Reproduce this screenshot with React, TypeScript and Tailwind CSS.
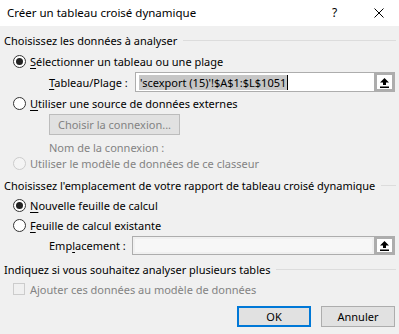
import React from 'react';

const font = { fontFamily: '"Noto Sans", "Open Sans", sans-serif' };

const Radio: React.FC<{ checked?: boolean; disabled?: boolean }> = ({ checked, disabled }) => (
  <span
    className={`w-[13px] h-[13px] rounded-full border flex items-center justify-center shrink-0 ${
      disabled ? 'border-[#cccccc] bg-[#f4f4f4]' : 'border-[#333333] bg-white'
    }`}
  >
    {checked && <span className="w-[7px] h-[7px] rounded-full bg-[#222222]" />}
  </span>
);

const SectionHeader: React.FC<{ label: string }> = ({ label }) => (
  <div className="mt-[4px] h-[20px] flex items-center pl-[4px] pr-[3px] gap-[6px]">
    <span className="text-black whitespace-nowrap">{label}</span>
    <span className="flex-1 h-px bg-[#dcdcdc]" />
  </div>
);

const RefButton: React.FC = () => (
  <div className="w-[21px] h-full border-[3px] border-[#adadad] bg-white flex items-center justify-center">
    <svg width="11" height="11" viewBox="0 0 11 11">
      <path d="M5.5 1 L10 5.5 H7 V8 H4 V5.5 H1 Z" fill="#000" />
      <rect x="1" y="9.5" width="9" height="1.5" fill="#000" />
    </svg>
  </div>
);

const App: React.FC = () => {
  return (
    <div className="w-[399px] h-[334px] bg-[#f0f0f0] text-[11px] leading-none overflow-hidden" style={font}>
      {/* title bar */}
      <div className="h-[26px] bg-white flex items-center pl-[7px]">
        <span className="flex-1 text-black text-[11.5px]">Créer un tableau croisé dynamique</span>
        <span className="w-[10px] text-[12px] mr-[32px] text-black">?</span>
        <svg width="10" height="10" viewBox="0 0 10 10" className="mr-[15px]">
          <path d="M0.5 0.5 L9.5 9.5 M9.5 0.5 L0.5 9.5" stroke="#000" strokeWidth="1" />
        </svg>
      </div>

      <SectionHeader label="Choisissez les données à analyser" />

      <div className="mt-[1px] h-[20px] flex items-center pl-[13px] gap-[4px]">
        <Radio checked />
        <span className="text-black">
          <u className="underline-offset-2">S</u>électionner un tableau ou une plage
        </span>
      </div>

      <div className="mt-[1px] h-[20px] flex items-center pl-[49px]">
        <span className="w-[86px] text-black whitespace-nowrap">
          <u className="underline-offset-2">T</u>ableau/Plage :
        </span>
        <div className="flex-1 h-full border border-[#adadad] border-r-0 bg-white flex items-center pl-[3px]">
          <span className="bg-[#c6c6c6] text-black px-px py-[2px]">'scexport (15)'!$A$1:$L$1051</span>
          <span className="w-px h-[15px] bg-black" />
        </div>
        <div className="h-full mr-[4px]">
          <RefButton />
        </div>
      </div>

      <div className="mt-[1px] h-[20px] flex items-center pl-[13px] gap-[4px]">
        <Radio />
        <span className="text-black">
          <u className="underline-offset-2">U</u>tiliser une source de données externes
        </span>
      </div>

      <div className="mt-[1px] h-[21px] flex pl-[49px]">
        <div className="w-[131px] h-full border border-[#bcbcbc] bg-[#e1e1e1] flex items-center justify-center text-[#838383]">
          Choisir la connexion...
        </div>
      </div>

      <div className="mt-[4px] h-[16px] flex items-center pl-[49px] text-[#838383]">Nom de la connexion :</div>

      <div className="h-[16px] flex items-center pl-[13px] gap-[4px] text-[#838383]">
        <Radio disabled />
        <span>Utiliser le modèle de données de ce classeur</span>
      </div>

      <div className="mt-[2px]">
        <SectionHeader label="Choisissez l'emplacement de votre rapport de tableau croisé dynamique" />
      </div>

      <div className="h-[20px] flex items-center pl-[13px] gap-[4px]">
        <Radio checked />
        <span className="text-black">
          <u className="underline-offset-2">N</u>ouvelle feuille de calcul
        </span>
      </div>

      <div className="h-[20px] flex items-center pl-[13px] gap-[4px]">
        <Radio />
        <span className="text-black">
          <u className="underline-offset-2">F</u>euille de calcul existante
        </span>
      </div>

      <div className="mt-[1px] h-[19px] flex items-center pl-[49px]">
        <span className="w-[83px] text-black whitespace-nowrap">
          Emp<u className="underline-offset-2">l</u>acement :
        </span>
        <div className="flex-1 h-full border border-[#adadad] border-r-0 bg-[#f0f0f0] p-[2px]">
          <div className="w-full h-full bg-[#f7f7f7]" />
        </div>
        <div className="h-full mr-[4px]">
          <RefButton />
        </div>
      </div>

      <div className="mt-[2px]">
        <SectionHeader label="Indiquez si vous souhaitez analyser plusieurs tables" />
      </div>

      <div className="h-[20px] flex items-center pl-[13px] gap-[5px] text-[#838383]">
        <span className="w-[12px] h-[12px] border border-[#cccccc] bg-[#f0f0f0]" />
        <span>Ajouter ces données au modèle de données</span>
      </div>

      <div className="mt-[7px] h-[21px] flex justify-end pr-[4px] gap-[10px]">
        <button className="w-[74px] h-full border-2 border-[#0078d7] bg-[#e1e1e1] text-black">OK</button>
        <button className="w-[74px] h-full border border-[#adadad] bg-[#e1e1e1] text-black">Annuler</button>
      </div>
    </div>
  );
};

export default App;
